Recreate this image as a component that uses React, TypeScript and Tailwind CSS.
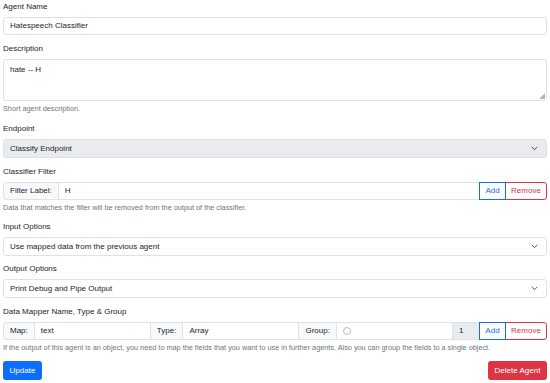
import React from "react";

const Label = ({ children }: { children: React.ReactNode }) => (
  <div className="h-[14px] leading-[14px] mb-[3px]">{children}</div>
);

const Help = ({ children }: { children: React.ReactNode }) => (
  <div className="mt-[2px] h-[12px] leading-[12px] text-[7.3px] text-[#6c757d] whitespace-nowrap">{children}</div>
);

const Chevron = () => (
  <svg width="7" height="5" viewBox="0 0 7 5" className="shrink-0">
    <path d="M1 1.2 L3.5 3.6 L6 1.2" fill="none" stroke="#343a40" strokeWidth="0.9" strokeLinecap="round" strokeLinejoin="round" />
  </svg>
);

const Select = ({ text, disabled }: { text: string; disabled?: boolean }) => (
  <div
    className={`h-[19px] border border-[#dee2e6] rounded-[3px] pl-[6px] pr-[8px] flex items-center justify-between ${
      disabled ? "bg-[#e9ecef]" : "bg-white"
    }`}
  >
    <span>{text}</span>
    <Chevron />
  </div>
);

const Addon = ({ children, first }: { children: React.ReactNode; first?: boolean }) => (
  <div
    className={`h-full flex items-center px-[6px] bg-[#f8f9fa] border border-[#dee2e6] shrink-0 ${
      first ? "rounded-l-[3px]" : "-ml-px"
    }`}
  >
    {children}
  </div>
);

const Field = ({ children }: { children?: React.ReactNode }) => (
  <div className="h-full flex-1 min-w-0 flex items-center px-[6px] border border-[#dee2e6] -ml-px bg-white">
    {children}
  </div>
);

const AddRemove = () => (
  <>
    <div className="h-full flex items-center justify-center w-[27px] border border-[#0d6efd] text-[#0d6efd] -ml-px relative z-10 shrink-0">
      Add
    </div>
    <div className="h-full flex items-center justify-center w-[42px] border border-[#dc3545] text-[#dc3545] rounded-r-[3px] -ml-px shrink-0">
      Remove
    </div>
  </>
);

export default function App() {
  return (
    <div className="w-[550px] h-[383px] bg-white px-[3px] font-['Liberation_Sans',Arial,sans-serif] text-[8px] text-[#212529] overflow-hidden">
      <Label>Agent Name</Label>
      <div className="h-[18px] border border-[#dee2e6] rounded-[3px] px-[6px] flex items-center mb-[7px]">
        Hatespeech Classifier
      </div>

      <Label>Description</Label>
      <div className="relative h-[42px] border border-[#dee2e6] rounded-[3px] px-[6px] pt-[4px] leading-[12px]">
        hate -- H
        <svg width="6" height="6" viewBox="0 0 6 6" className="absolute right-[1px] bottom-[1px]">
          <path d="M6 0 L6 6 L0 6 Z" fill="#b5b5b5" />
        </svg>
      </div>
      <Help>Short agent description.</Help>

      <div className="mt-[7px]">
        <Label>Endpoint</Label>
        <Select text="Classify Endpoint" disabled />
      </div>

      <div className="mt-[7px]">
        <Label>Classifier Filter</Label>
        <div className="h-[18px] flex">
          <Addon first>Filter Label:</Addon>
          <Field>H</Field>
          <AddRemove />
        </div>
        <Help>Data that matches the filter will be removed from the output of the classifier.</Help>
      </div>

      <div className="mt-[6px]">
        <Label>Input Options</Label>
        <Select text="Use mapped data from the previous agent" />
      </div>

      <div className="mt-[6px]">
        <Label>Output Options</Label>
        <Select text="Print Debug and Pipe Output" />
      </div>

      <div className="mt-[7px]">
        <Label>Data Mapper Name, Type &amp; Group</Label>
        <div className="h-[18px] flex">
          <Addon first>Map:</Addon>
          <Field>text</Field>
          <Addon>Type:</Addon>
          <Field>Array</Field>
          <Addon>Group:</Addon>
          <Field>
            <div className="w-[8px] h-[8px] rounded-full border border-[#b8bec4] bg-white" />
          </Field>
          <div className="h-full w-[28px] shrink-0 flex items-center px-[6px] bg-[#e9ecef] border border-[#dee2e6] -ml-px">
            1
          </div>
          <AddRemove />
        </div>
        <Help>
          If the output of this agent is an object, you need to map the fields that you want to use in further agents. Also you can group the fields to a single object.
        </Help>
      </div>

      <div className="mt-[7px] flex justify-between">
        <div className="h-[19px] w-[39px] flex items-center justify-center rounded-[3px] bg-[#0d6efd] text-white">
          Update
        </div>
        <div className="h-[19px] w-[59px] flex items-center justify-center rounded-[3px] bg-[#dc3545] text-white">
          Delete Agent
        </div>
      </div>
    </div>
  );
}
